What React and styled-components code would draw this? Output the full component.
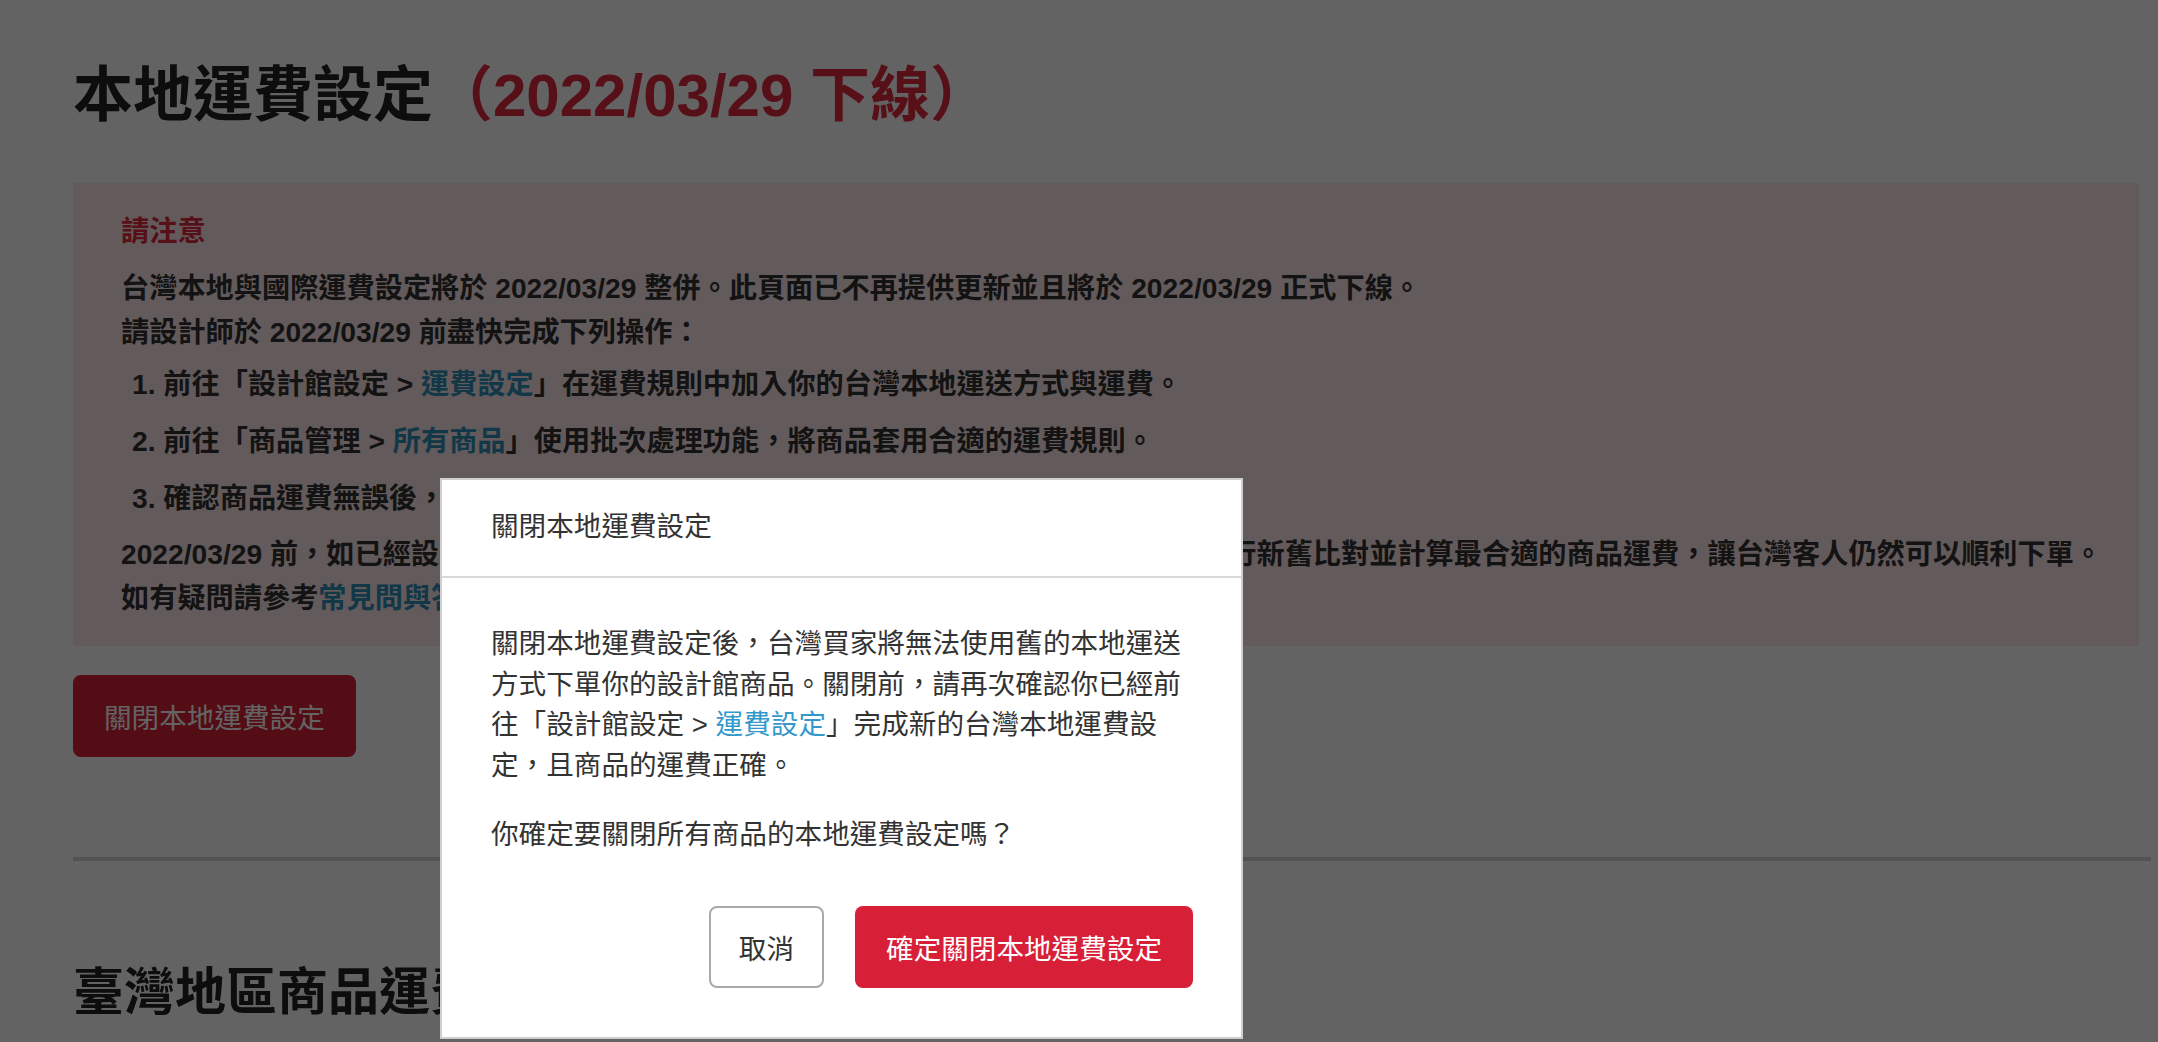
import React from "react";
import styled, { createGlobalStyle } from "styled-components";

const GlobalStyle = createGlobalStyle`
  html, body {
    margin: 0;
    height: 100%;
    overflow: hidden;
    background: #ffffff;
  }
  body {
    font-family: "Liberation Sans", "Noto Sans CJK TC", sans-serif;
  }
`;

const Page = styled.div`
  padding: 54px 7px 0 73px;
  color: #333;
`;

const Title = styled.h1`
  margin: 0;
  font-size: 60px;
  line-height: 84px;
  font-weight: 700;
  color: #222;
`;

const Red = styled.span`
  color: #e1283f;
`;

const Notice = styled.section`
  margin: 45px 12px 0 0;
  padding: 30px 48px 26px;
  background: #ffe8eb;
  font-size: 28.2px;
  font-weight: 700;
`;

const NoticeTitle = styled.div`
  color: #e1283f;
  line-height: 36px;
  margin-bottom: 17px;
`;

const NoticeText = styled.p`
  margin: 0;
  line-height: 44px;
  white-space: nowrap;
`;

const Steps = styled.ol`
  margin: 8px 0 12px;
  padding: 0 0 0 11px;
  list-style: none;
`;

const Step = styled.li`
  line-height: 44px;
  margin-bottom: 13px;
  white-space: nowrap;

  &:last-child {
    margin-bottom: 0;
  }
`;

const Link = styled.a`
  color: ${(p) => (p.$dim ? "#2f8fb8" : "#3399cc")};
  text-decoration: none;
`;

const Button = styled.button`
  height: 82px;
  padding: 0 ${(p) => (p.$outline ? "28px" : "31px")};
  border: ${(p) => (p.$outline ? "2px solid #a9a9a9" : "none")};
  border-radius: 8px;
  background: ${(p) => (p.$outline ? "#ffffff" : "#d81f38")};
  color: ${(p) => (p.$outline ? "#333" : "#ffffff")};
  font-family: inherit;
  font-size: 27.6px;
  cursor: pointer;
`;

const PageButton = styled(Button)`
  margin-top: 29px;
`;

const Divider = styled.hr`
  margin: 100px 0 0;
  height: 4px;
  border: 0;
  background: #d4d4d4;
`;

const SectionTitle = styled.h2`
  margin: 96px 0 0;
  font-size: 51px;
  line-height: 72px;
  font-weight: 700;
  color: #222;
`;

const Backdrop = styled.div`
  position: fixed;
  inset: 0;
  background: rgba(0, 0, 0, 0.61);
`;

const Dialog = styled.div`
  position: fixed;
  left: 440px;
  top: 478px;
  width: 803px;
  box-sizing: border-box;
  background: #ffffff;
  border: 2px solid #cfcfcf;
  color: #333;
  font-size: 27.6px;
`;

const DialogHeader = styled.div`
  padding: 25px 49px 27px;
  line-height: 44px;
  border-bottom: 2px solid #d9d9d9;
`;

const DialogBody = styled.div`
  padding: 46px 48px 49px 49px;
`;

const Para = styled.p`
  margin: ${(p) => (p.$gap ? "29px 0 0" : "0")};
  line-height: 40.6px;
`;

const Actions = styled.div`
  display: flex;
  justify-content: flex-end;
  gap: 31px;
  margin-top: 50px;
`;

export default function App() {
  return (
    <>
      <GlobalStyle />
      <Page>
        <Title>
          本地運費設定<Red>（2022/03/29 下線）</Red>
        </Title>
        <Notice>
          <NoticeTitle>請注意</NoticeTitle>
          <NoticeText>
            台灣本地與國際運費設定將於 2022/03/29 整併。此頁面已不再提供更新並且將於 2022/03/29 正式下線。
          </NoticeText>
          <NoticeText>請設計師於 2022/03/29 前盡快完成下列操作：</NoticeText>
          <Steps>
            <Step>
              1. 前往「設計館設定 &gt; <Link $dim href="#">運費設定</Link>」在運費規則中加入你的台灣本地運送方式與運費。
            </Step>
            <Step>
              2. 前往「商品管理 &gt; <Link $dim href="#">所有商品</Link>」使用批次處理功能，將商品套用合適的運費規則。
            </Step>
            <Step>3. 確認商品運費無誤後，點擊下方「關閉本地運費設定」按鈕。</Step>
          </Steps>
          <NoticeText>
            2022/03/29 前，如已經設定台灣本地運費及國際運費，系統將會於台灣買家結帳時自動進行新舊比對並計算最合適的商品運費，讓台灣客人仍然可以順利下單。
          </NoticeText>
          <NoticeText>
            如有疑問請參考<Link $dim href="#">常見問與答</Link>。
          </NoticeText>
        </Notice>
        <PageButton>關閉本地運費設定</PageButton>
        <Divider />
        <SectionTitle>臺灣地區商品運費設定</SectionTitle>
      </Page>

      <Backdrop />
      <Dialog>
        <DialogHeader>關閉本地運費設定</DialogHeader>
        <DialogBody>
          <Para>
            關閉本地運費設定後，台灣買家將無法使用舊的本地運送
            <br />
            方式下單你的設計館商品。關閉前，請再次確認你已經前
            <br />
            往「設計館設定 &gt; <Link href="#">運費設定</Link>」完成新的台灣本地運費設
            <br />
            定，且商品的運費正確。
          </Para>
          <Para $gap>你確定要關閉所有商品的本地運費設定嗎？</Para>
          <Actions>
            <Button $outline>取消</Button>
            <Button>確定關閉本地運費設定</Button>
          </Actions>
        </DialogBody>
      </Dialog>
    </>
  );
}
